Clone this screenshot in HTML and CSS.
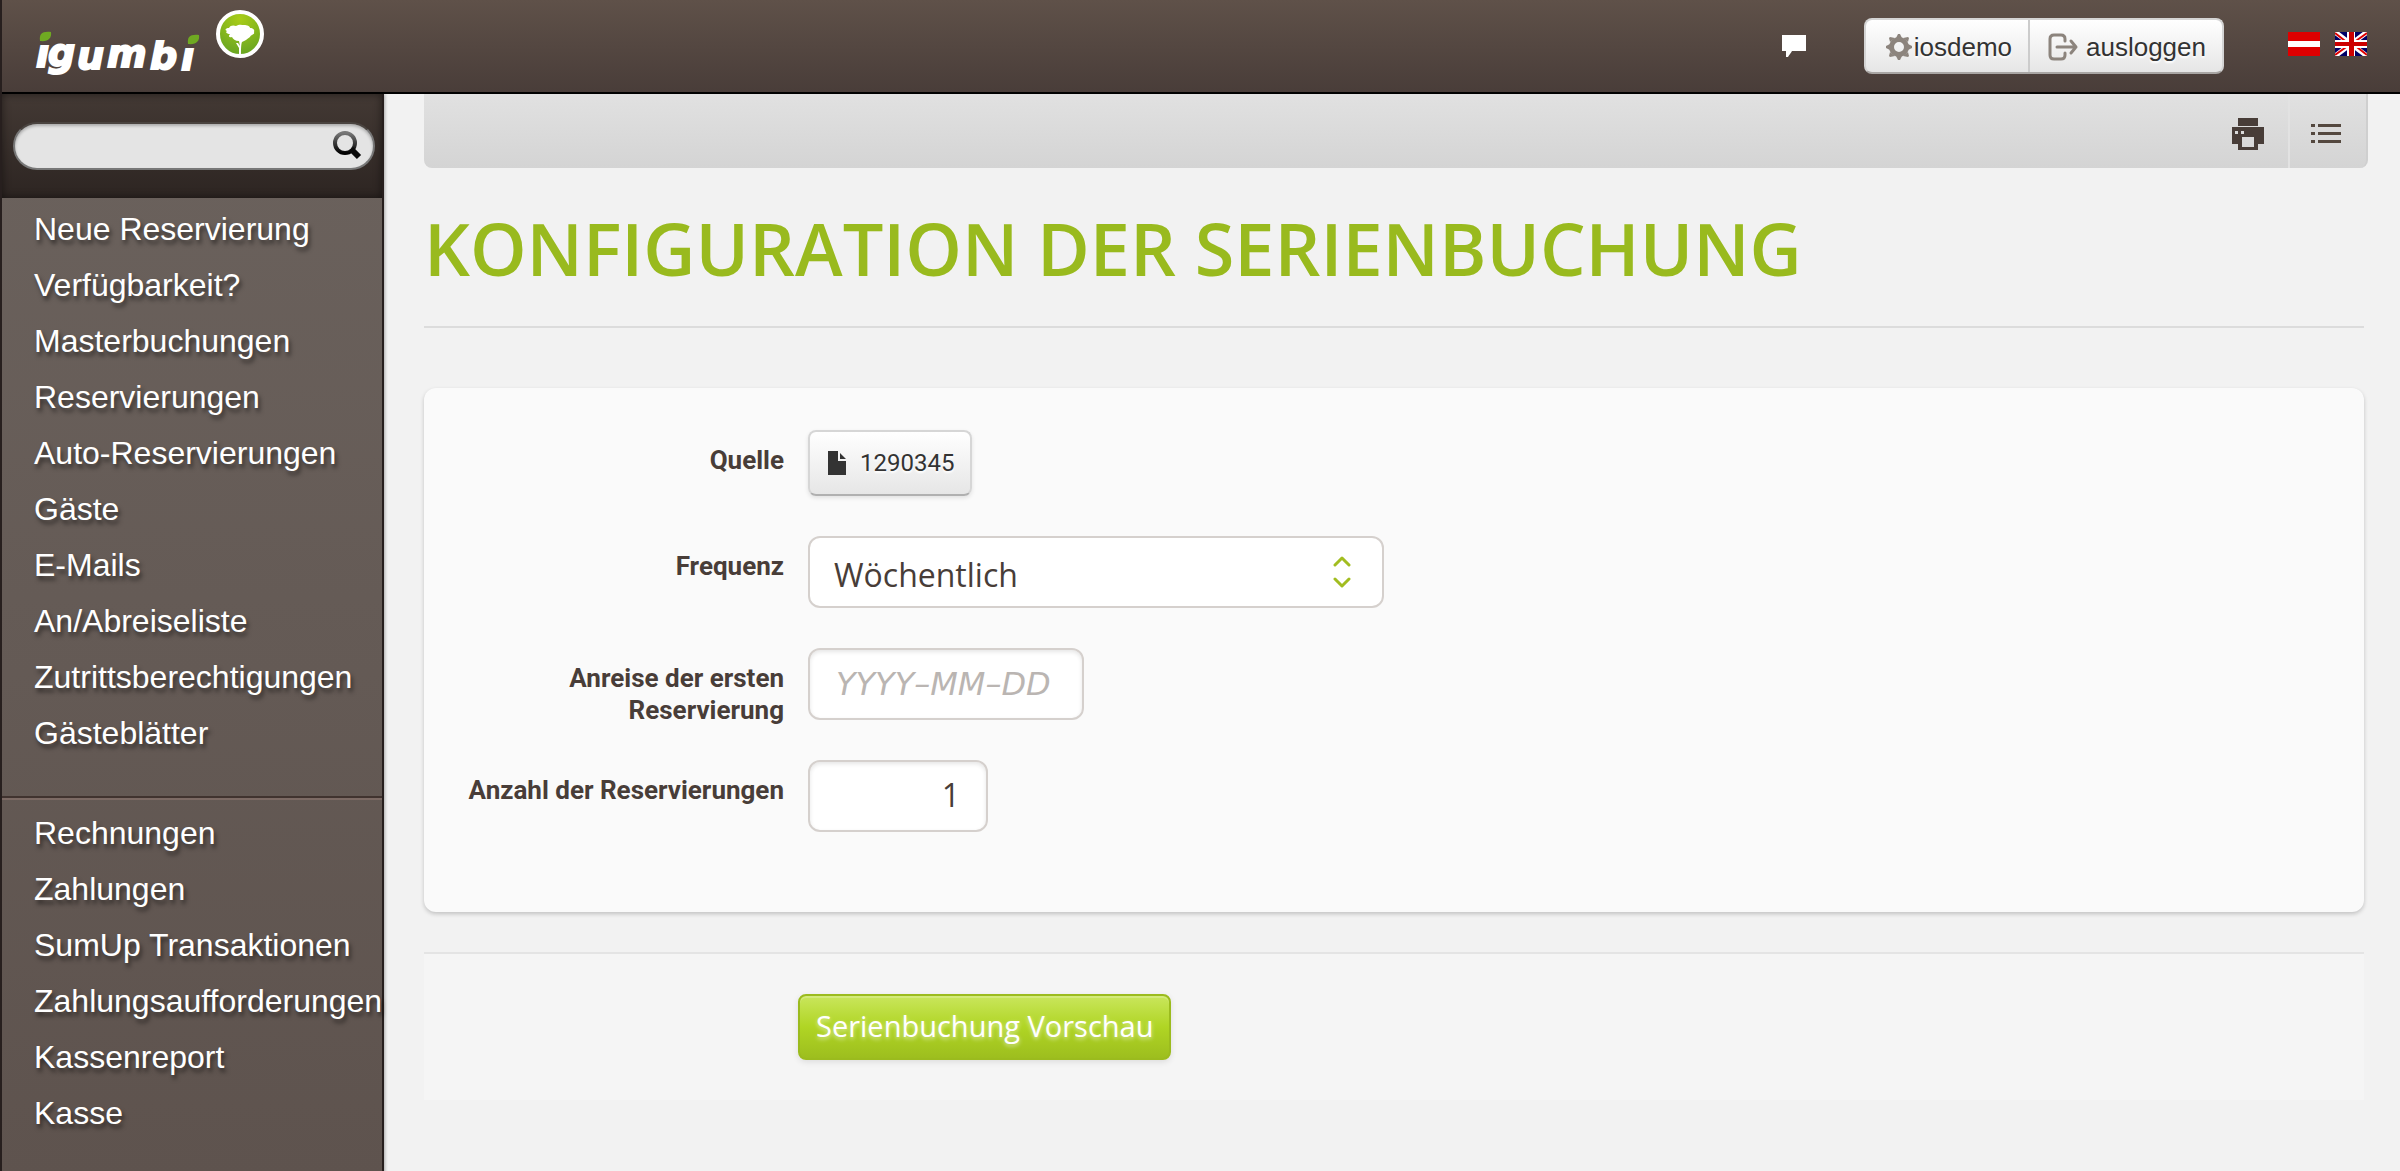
FILE: index.html
```html
<!DOCTYPE html>
<html lang="de">
<head>
    <meta charset="UTF-8">
    <meta name="viewport" content="width=device-width, initial-scale=1.0">
    <title>Konfiguration der Serienbuchung</title>
    <link rel="stylesheet" href="styles.css">
</head>
<body>
    <header class="header">
        <a class="logo" href="#" aria-label="igumbi">
            <svg width="240" height="84" viewBox="0 0 240 84">
                <defs>
                    <radialGradient id="badge" cx="50%" cy="15%" r="80%">
                        <stop offset="0" stop-color="#a9cd18"/>
                        <stop offset="1" stop-color="#6aa621"/>
                    </radialGradient>
                </defs>
                <!-- dotless i, the leaves are the dots -->
                <text class="logo-text" x="2 14 43 73 116 147" y="67 66 69 67 69 70">ıgumbı</text>
                <path fill="#6fa922" d="M6 41 C5 34 8 31 17 32 C18 38 14 42 6 41 Z"/>
                <path fill="#6fa922" d="M154 44 C153 37 156 34 165 35 C166 41 162 45 154 44 Z"/>
                <circle cx="206" cy="34" r="22" fill="url(#badge)" stroke="#fff" stroke-width="4"/>
                <path fill="#fff" d="M205 55 L205 48 L202 43 L204 43 L206 46 L205 41 C201 41 199 39 198 37 C195 38 194 36 196 34 C193 34 191 32 193 31 C190 30 192 28 195 28 C196 25 200 25 202 26 C205 24 208 25 210 25 C213 25 216 26 216 28 C219 28 221 30 220 32 C221 35 217 34 216 37 C213 39 211 41 208 42 C207 44 207 50 207 55 Z"/>
            </svg>
        </a>
        <div class="header-tools">
            <a class="chat-link" href="#" aria-label="Chat">
                <svg width="24" height="22" viewBox="0 0 24 22"><path fill="#fff" d="M0 0 H24 V16 H10 C9 18 7 20 6 22 H4 V16 H0 Z"/></svg>
            </a>
            <div class="user-menu">
                <a href="#">
                    <svg width="26" height="26" viewBox="0 0 26 26">
                        <g fill="#8c847d">
                            <path fill-rule="evenodd" d="M13 3 A10 10 0 1 0 13 23 A10 10 0 1 0 13 3 Z M13 8 A5 5 0 1 1 13 18 A5 5 0 1 1 13 8 Z"/>
                            <path d="M10 4 L12 0 H14 L16 4 Z M10 22 L12 26 H14 L16 22 Z M4 10 L0 12 V14 L4 16 Z M22 10 L26 12 V14 L22 16 Z"/>
                            <path d="M4 8 L3 4 L4 3 L9 4 Z M22 8 L23 4 L22 3 L17 4 Z M4 18 L3 22 L4 23 L9 22 Z M22 18 L23 22 L22 23 L17 22 Z"/>
                        </g>
                    </svg>
                    <span>iosdemo</span>
                </a>
                <a href="#">
                    <svg width="30" height="28" viewBox="0 0 30 28" fill="none" stroke="#8c847d" stroke-width="3" stroke-linecap="round" stroke-linejoin="round">
                        <path d="M17 8 V6 Q17 2 13 2 H6 Q2 2 2 6 V22 Q2 26 6 26 H13 Q17 26 17 22 V20 M9 14 H28 M23 8 L28 14 L23 20"/>
                    </svg>
                    <span>ausloggen</span>
                </a>
            </div>
            <div class="languages">
                <a href="#" aria-label="Deutsch">
                    <svg width="32" height="24" viewBox="0 0 32 24"><path fill="#df0000" d="M0 0 H32 V24 H0 Z"/><path fill="#fff" d="M0 9 H32 V15 H0 Z"/></svg>
                </a>
                <a href="#" aria-label="English">
                    <svg width="32" height="24" viewBox="0 0 32 24">
                        <path fill="#006" d="M0 0 H32 V24 H0 Z"/>
                        <path stroke="#fff" stroke-width="5" d="M0 0 L32 24 M32 0 L0 24"/>
                        <path stroke="#d00" stroke-width="2" d="M0 1 L14 12 M32 1 L18 11 M32 23 L18 12 M0 23 L14 13"/>
                        <path fill="#fff" d="M12 0 H20 V24 H12 Z M0 8 H32 V16 H0 Z"/>
                        <path fill="#c00" d="M14 0 H19 V24 H14 Z M0 10 H32 V14 H0 Z"/>
                    </svg>
                </a>
            </div>
        </div>
    </header>

    <div class="page">
        <aside class="sidebar">
            <form class="search">
                <input type="text" aria-label="Suche">
                <button type="button" aria-label="Suchen">
                    <svg width="30" height="30" viewBox="0 0 30 30" fill="none">
                        <defs>
                            <linearGradient id="lens" x1="0" y1="0" x2="0" y2="1">
                                <stop offset="0" stop-color="#777"/>
                                <stop offset="1" stop-color="#000"/>
                            </linearGradient>
                        </defs>
                        <circle cx="13" cy="13" r="10" stroke="url(#lens)" stroke-width="4"/>
                        <path stroke="#0a0a0a" stroke-width="6" d="M19 19 L27 27"/>
                    </svg>
                </button>
            </form>
            <nav>
                <ul>
                    <li><a href="#">Neue Reservierung</a></li>
                    <li><a href="#">Verfügbarkeit?</a></li>
                    <li><a href="#">Masterbuchungen</a></li>
                    <li><a href="#">Reservierungen</a></li>
                    <li><a href="#">Auto-Reservierungen</a></li>
                    <li><a href="#">Gäste</a></li>
                    <li><a href="#">E-Mails</a></li>
                    <li><a href="#">An/Abreiseliste</a></li>
                    <li><a href="#">Zutrittsberechtigungen</a></li>
                    <li><a href="#">Gästeblätter</a></li>
                </ul>
                <ul>
                    <li><a href="#">Rechnungen</a></li>
                    <li><a href="#">Zahlungen</a></li>
                    <li><a href="#">SumUp Transaktionen</a></li>
                    <li><a href="#">Zahlungsaufforderungen</a></li>
                    <li><a href="#">Kassenreport</a></li>
                    <li><a href="#">Kasse</a></li>
                </ul>
            </nav>
        </aside>

        <main class="main">
            <div class="toolbar">
                <a href="#" aria-label="Drucken">
                    <svg width="32" height="32" viewBox="0 0 32 32"><path fill="#483d38" fill-rule="evenodd" d="M6 0 H26 V8 H6 Z M0 9 H32 V26 H26 V32 H6 V26 H0 Z M3 13 V16 H6 V13 Z M9 13 V16 H12 V13 Z M10 19 V29 H22 V19 Z"/></svg>
                </a>
                <a href="#" aria-label="Liste">
                    <svg width="30" height="20" viewBox="0 0 30 20"><path fill="#54483f" d="M0 0 H4 V3 H0 Z M7 0 H30 V3 H7 Z M0 8 H4 V11 H0 Z M7 8 H30 V11 H7 Z M0 16 H4 V19 H0 Z M7 16 H30 V19 H7 Z"/></svg>
                </a>
            </div>

            <form class="content">
                <h1>KONFIGURATION DER SERIENBUCHUNG</h1>

                <div class="card">
                    <div class="form-row">
                        <span class="label">Quelle</span>
                        <a class="source-btn" href="#">
                            <svg width="18" height="24" viewBox="0 0 18 24"><path fill="#333" d="M0 0 H10 V10 H18 V24 H0 Z M12 2 L18 8 H12 Z"/></svg>
                            1290345
                        </a>
                    </div>
                    <div class="form-row">
                        <label class="label" for="frequency">Frequenz</label>
                        <div class="select">
                            <select id="frequency">
                                <option>Wöchentlich</option>
                            </select>
                            <svg width="20" height="32" viewBox="0 0 20 32" fill="none" stroke="#a2bd20" stroke-width="3" stroke-linecap="round" stroke-linejoin="round">
                                <path d="M3 9 L10 2 L17 9 M3 23 L10 30 L17 23"/>
                            </svg>
                        </div>
                    </div>
                    <div class="form-row">
                        <label class="label" for="arrival">Anreise der ersten Reservierung</label>
                        <input class="date" type="text" id="arrival" placeholder="YYYY–MM–DD">
                    </div>
                    <div class="form-row">
                        <label class="label" for="count">Anzahl der Reservierungen</label>
                        <input class="count" type="text" id="count" value="1">
                    </div>
                </div>

                <div class="actions">
                    <button type="button" class="submit-btn">Serienbuchung Vorschau</button>
                </div>
            </form>
        </main>
    </div>
</body>
</html>
```
FILE: styles.css
```css
* {
    box-sizing: border-box;
}
body {
    margin: 0;
    min-height: 100vh;
    display: flex;
    flex-direction: column;
    border-left: 2px solid #271f1e;
    background: #f2f2f2;
    color: #483d38;
    font-family: "Open Sans", sans-serif;
}
a {
    color: inherit;
    text-decoration: none;
}
svg {
    display: block;
    flex: none;
}

/* Header */
.header {
    display: flex;
    justify-content: space-between;
    height: 94px;
    padding: 0 33px 0 32px;
    border-bottom: 2px solid #000;
    background: linear-gradient(#5f5149, #493d39);
    font-family: "Liberation Sans", Arial, sans-serif;
}
.logo-text {
    fill: #fff;
    stroke: #fff;
    stroke-width: 2px;
    font-family: "DejaVu Sans", sans-serif;
    font-size: 38px;
    font-style: italic;
    font-weight: 700;
}
.header-tools {
    display: flex;
    align-items: center;
}
.chat-link {
    margin-right: 58px;
}
.user-menu {
    display: flex;
    height: 56px;
    margin-right: 64px;
    border: 2px solid #d4d4d4;
    border-bottom-color: #a9a6a4;
    border-radius: 8px;
    background: linear-gradient(#fff, #e6e6e6);
    color: #333;
    font-size: 26px;
    text-shadow: 0 2px 2px #fff;
}
.user-menu a {
    display: flex;
    align-items: center;
    gap: 8px;
    padding: 2px 16px 0 18px;
}
.user-menu a:first-child {
    gap: 2px;
    padding-left: 20px;
    border-right: 2px solid #ccc;
}
.languages {
    display: flex;
    gap: 15px;
    margin-bottom: 4px;
}

/* Sidebar */
.page {
    flex: 1;
    display: flex;
}
.sidebar {
    width: 382px;
    flex: none;
    border-right: 2px solid #271f1e;
    background: linear-gradient(#6b625d, #5e534e);
    box-shadow: 1px 0 3px rgba(0, 0, 0, 0.3);
    font-family: "Liberation Sans", Arial, sans-serif;
}
.search {
    position: relative;
    height: 104px;
    padding: 28px 7px 0 11px;
    background: linear-gradient(#433934, #2d2522);
    box-shadow: inset 0 0 8px rgba(0, 0, 0, 0.5);
}
.search input {
    width: 100%;
    height: 48px;
    padding: 0 56px 0 20px;
    border: 2px solid #777;
    border-top-color: #4a4440;
    border-radius: 24px;
    background: #e4e4e4;
    box-shadow: inset 0 2px 3px rgba(0, 0, 0, 0.25);
    font-size: 26px;
}
.search button {
    position: absolute;
    top: 36px;
    right: 20px;
    padding: 0;
    border: none;
    background: none;
}
.sidebar ul {
    margin: 0;
    padding: 3px 0 35px 32px;
    list-style: none;
}
.sidebar ul + ul {
    border-top: 2px solid #40332f;
    box-shadow: inset 0 2px 0 #7c6a64;
    padding-top: 7px;
}
.sidebar li a {
    display: block;
    line-height: 56px;
    color: #fff;
    font-size: 32px;
    text-shadow: 2px 4px 4px rgba(0, 0, 0, 0.5);
    white-space: nowrap;
}

/* Main */
.main {
    flex: 1;
    min-width: 0;
    padding: 0 32px 40px 40px;
}
.toolbar {
    display: flex;
    justify-content: flex-end;
    height: 74px;
    border-right: 2px solid #cfcfcf;
    border-radius: 0 0 8px 8px;
    background: linear-gradient(#e1e1e1, #d4d4d4);
}
.toolbar a {
    display: flex;
    align-items: center;
    padding: 6px 24px 0;
}
.toolbar a + a {
    border-left: 2px solid #e2e2e2;
    padding: 6px 25px 0 21px;
}
.content {
    margin-right: 4px;
}
h1 {
    margin: 0 0 60px;
    padding: 38px 0 36px;
    border-bottom: 2px solid #dcdcdc;
    color: #99ba1e;
    font-size: 72px;
    font-weight: 600;
    line-height: 84px;
}
.card {
    padding: 42px 0 40px;
    border-radius: 12px;
    background: #fafafa;
    box-shadow: 0 2px 4px rgba(0, 0, 0, 0.2);
}
.form-row {
    display: grid;
    grid-template-columns: 360px 1fr;
    column-gap: 24px;
    align-items: start;
    justify-items: start;
}
.label {
    justify-self: end;
    max-width: 320px;
    padding-top: 14px;
    font-family: Roboto, sans-serif;
    font-size: 26px;
    font-weight: 700;
    line-height: 32px;
    text-align: right;
}
.source-btn {
    display: flex;
    align-items: center;
    gap: 14px;
    height: 66px;
    margin-bottom: 40px;
    padding: 0 16px 0 18px;
    border: 2px solid #d6d6d6;
    border-bottom-color: #b0b0b0;
    border-radius: 8px;
    background: linear-gradient(#fff, #e6e6e6);
    box-shadow: 0 2px 4px rgba(0, 0, 0, 0.1);
    color: #333;
    font-family: Roboto, sans-serif;
    font-size: 24px;
    text-shadow: 0 2px 2px #fff;
}
.form-row input, .form-row select {
    display: block;
    height: 72px;
    margin: 0;
    border: 2px solid #d5d0cd;
    border-radius: 12px;
    background: #fff;
    color: #483d38;
    font-family: "Open Sans", sans-serif;
    font-size: 32px;
}
.form-row input {
    margin-bottom: 40px;
    padding: 0 26px 4px;
    box-shadow: inset 0 2px 4px rgba(0, 0, 0, 0.1);
}
.date {
    width: 276px;
}
.date::placeholder {
    color: #bab5b2;
    font-family: "DejaVu Sans", sans-serif;
    font-style: italic;
}
.count {
    width: 180px;
    text-align: right;
}
.select {
    position: relative;
    width: 576px;
    margin-bottom: 40px;
}
.form-row select {
    width: 100%;
    padding: 4px 60px 0 24px;
    appearance: none;
}
.select svg {
    position: absolute;
    top: 20px;
    right: 32px;
    pointer-events: none;
}
.actions {
    margin-top: 40px;
    padding: 40px 0 40px 374px;
    border-top: 2px solid #e4e4e4;
    background: #f5f5f5;
}
.submit-btn {
    display: block;
    height: 66px;
    padding: 0 16px 4px;
    border: 2px solid #9bbb1e;
    border-radius: 8px;
    background: linear-gradient(#c9e65c, #b0d524 50%, #9dbe1e);
    box-shadow: 0 2px 6px rgba(0, 0, 0, 0.1), inset 0 2px 0 rgba(255, 255, 255, 0.2);
    color: #fff;
    font-family: "Open Sans", sans-serif;
    font-size: 29px;
    text-shadow: 0 2px 4px rgba(255, 255, 255, 0.6);
}
```
